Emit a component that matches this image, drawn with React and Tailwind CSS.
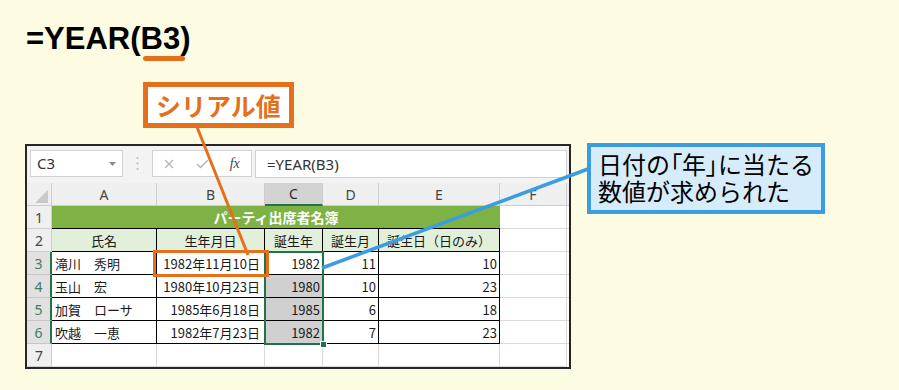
import React from "react";

const CJK = "font-['Noto_Sans_CJK_JP','Noto_Sans',sans-serif]";

const rows = [
  { n: 3, a: "滝川　秀明", b: "1982年11月10日", c: "1982", d: "11", e: "10" },
  { n: 4, a: "玉山　宏", b: "1980年10月23日", c: "1980", d: "10", e: "23" },
  { n: 5, a: "加賀　ローサ", b: "1985年6月18日", c: "1985", d: "6", e: "18" },
  { n: 6, a: "吹越　一恵", b: "1982年7月23日", c: "1982", d: "7", e: "23" },
];

function FormulaBar() {
  return (
    <div className="h-[41px] flex items-start pt-[4px] pl-[3px] pr-[2px] bg-[#f3f3f3]">
      <div className="w-[93px] h-[27px] border border-[#d2d2d2] bg-white flex items-center justify-between pl-[6px] pr-[6px]">
        <span className="text-[15px] leading-none text-[#333] font-['Noto_Sans',sans-serif]">C3</span>
        <svg width="7" height="4" viewBox="0 0 7 4">
          <path d="M0 0 L7 0 L3.5 4 Z" fill="#8a8a8a" />
        </svg>
      </div>
      <div className="w-[29px] h-[27px] flex items-center justify-center">
        <svg width="3" height="13" viewBox="0 0 3 13">
          <rect x="0.5" y="0" width="2" height="2" fill="#c4c4c4" />
          <rect x="0.5" y="5.5" width="2" height="2" fill="#c4c4c4" />
          <rect x="0.5" y="11" width="2" height="2" fill="#c4c4c4" />
        </svg>
      </div>
      <div className="w-[100px] h-[27px] border border-[#d2d2d2] bg-white flex items-center">
        <div className="w-[33px] flex justify-center">
          <svg width="10" height="10" viewBox="0 0 10 10">
            <path d="M1 1 L9 9 M9 1 L1 9" stroke="#b3b3b3" strokeWidth="1.3" />
          </svg>
        </div>
        <div className="w-[33px] flex justify-center">
          <svg width="13" height="10" viewBox="0 0 13 10">
            <path d="M1 5 L4.5 8.5 L12 1" stroke="#b3b3b3" strokeWidth="1.4" fill="none" />
          </svg>
        </div>
        <div className="w-[33px] flex justify-center">
          <span className="text-[14px] leading-none italic text-[#444] font-['Liberation_Serif',serif]">fx</span>
        </div>
      </div>
      <div className="ml-[3px] flex-1 h-[28px] border border-[#d2d2d2] bg-white flex items-center pl-[11px]">
        <span className="text-[15px] leading-none text-[#333] font-['Noto_Sans',sans-serif]">=YEAR(B3)</span>
      </div>
    </div>
  );
}

function RowHead({ n, sel }) {
  return (
    <div
      className={
        sel
          ? "w-[25px] h-full border-b border-b-[#c6c6c6] border-r-2 border-r-[#217346] bg-[#e1e1e1] flex items-center justify-center text-[14px] text-[#3f7d5c] font-['Noto_Sans',sans-serif]"
          : "w-[25px] h-full border-r border-b border-[#cdcdcd] bg-[#efefef] flex items-center justify-center text-[14px] text-[#444] font-['Noto_Sans',sans-serif]"
      }
    >
      {n}
    </div>
  );
}

function GridCell({ w }) {
  return <div className={"h-full border-r border-b border-[#dadada] bg-white " + w} />;
}

function Excel() {
  const cell = "h-full border-r border-b border-black flex items-center text-[13px] leading-none text-[#1a1a1a] " + CJK;
  return (
    <div className="w-[546px] h-[225px] border-2 border-[#262626] bg-[#f3f3f3] overflow-hidden flex flex-col shrink-0">
      <FormulaBar />
      <div className="relative bg-white flex-1">
        {/* column headers */}
        <div className="flex h-[23px] bg-[#efefef] font-['Noto_Sans',sans-serif] text-[14px] text-[#444]">
          <div className="w-[25px] h-full border-r border-b border-[#cdcdcd] flex items-end justify-end pr-[3px] pb-[2px]">
            <svg width="13" height="13" viewBox="0 0 13 13">
              <path d="M13 0 L13 13 L0 13 Z" fill="#c9c9c9" />
            </svg>
          </div>
          <div className="w-[105px] h-full border-r border-b border-[#cdcdcd] flex items-center justify-center">A</div>
          <div className="w-[108px] h-full border-r border-b border-[#cdcdcd] flex items-center justify-center">B</div>
          <div className="w-[58px] h-full border-r border-r-[#cdcdcd] border-b-2 border-b-[#217346] bg-[#d3d3d3] flex items-center justify-center text-[#2b2b2b]">C</div>
          <div className="w-[56px] h-full border-r border-b border-[#cdcdcd] flex items-center justify-center">D</div>
          <div className="w-[121px] h-full border-r border-b border-[#cdcdcd] flex items-center justify-center">E</div>
          <div className="w-[67px] h-full border-r border-b border-[#cdcdcd] flex items-center justify-center">F</div>
          <div className="flex-1 h-full border-b border-[#cdcdcd]" />
        </div>

        {/* row 1 */}
        <div className="flex h-[23px]">
          <RowHead n={1} />
          <div className={"w-[448px] h-full border-b border-black bg-[#7fb244] flex items-center justify-center text-[14px] leading-none font-bold text-white " + CJK}>
            パーティ出席者名簿
          </div>
          <GridCell w="w-[67px]" />
          <div className="flex-1 h-full border-b border-[#dadada]" />
        </div>

        {/* row 2 */}
        <div className="flex h-[23px]">
          <RowHead n={2} />
          <div className={cell + " w-[105px] bg-[#e2efda] justify-center"}>氏名</div>
          <div className={cell + " w-[108px] bg-[#e2efda] justify-center"}>生年月日</div>
          <div className={cell + " w-[58px] bg-[#e2efda] justify-center"}>誕生年</div>
          <div className={cell + " w-[56px] bg-[#e2efda] justify-center"}>誕生月</div>
          <div className={cell + " w-[121px] bg-[#e2efda] justify-center"}>誕生日（日のみ）</div>
          <GridCell w="w-[67px]" />
          <div className="flex-1 h-full border-b border-[#dadada]" />
        </div>

        {rows.map((r, i) => (
          <div key={r.n} className="flex h-[23px]">
            <RowHead n={r.n} sel />
            <div className={cell + " w-[105px] bg-white pl-[3px]"}>{r.a}</div>
            <div className={cell + " w-[108px] bg-white justify-end pr-[4px]"}>{r.b}</div>
            <div className={cell + " w-[58px] justify-end pr-[2px] " + (i === 0 ? "bg-white" : "bg-[#d0d0d0]")}>{r.c}</div>
            <div className={cell + " w-[56px] bg-white justify-end pr-[2px]"}>{r.d}</div>
            <div className={cell + " w-[121px] bg-white justify-end pr-[2px]"}>{r.e}</div>
            <GridCell w="w-[67px]" />
            <div className="flex-1 h-full border-b border-[#dadada]" />
          </div>
        ))}

        {/* row 7 */}
        <div className="flex h-[23px]">
          <RowHead n={7} />
          <GridCell w="w-[105px]" />
          <GridCell w="w-[108px]" />
          <GridCell w="w-[58px]" />
          <GridCell w="w-[56px]" />
          <GridCell w="w-[121px]" />
          <GridCell w="w-[67px]" />
          <div className="flex-1 h-full" />
        </div>

        {/* selection C3:C6 */}
        <div className="absolute left-[237px] top-[68px] w-[60px] h-[94px] border-2 border-[#217346]" />
        <div className="absolute left-[293px] top-[158px] w-[7px] h-[7px] bg-[#217346] border border-white" />
        {/* orange highlight B3 */}
        <div className="absolute left-[126px] top-[67px] w-[116px] h-[27px] border-[3px] border-[#e5701b]" />
      </div>
    </div>
  );
}

export default function App() {
  return (
    <div className="relative w-[899px] h-[390px] overflow-hidden bg-[#fefbe3]">
      <div className="h-[54px] pt-[23px] pl-[26px] text-[31px] leading-[31px] font-bold text-black font-['Liberation_Sans',Arial,sans-serif]">
        =YEAR(B3)
      </div>
      <div className={"ml-[143px] mt-[28px] w-[151px] h-[46px] border-[5px] border-[#e5701b] bg-white flex items-center justify-center text-[25px] leading-none font-bold text-[#e5701b] " + CJK}>
        シリアル値
      </div>
      <div className="flex items-start mt-[16px] pl-[25px]">
        <Excel />
        <div className={"ml-[16px] -mt-[1px] w-[238px] h-[71px] border-4 border-[#3b9ce2] bg-[#d6ecfa] pt-[3px] pl-[7px] text-[24px] leading-[27px] text-black whitespace-nowrap " + CJK}>
          <div>
            日付の<span className="[font-feature-settings:'palt']">「年」</span>に当たる
          </div>
          <div>数値が求められた</div>
        </div>
      </div>
      <svg className="absolute inset-0 pointer-events-none" width="899" height="390" viewBox="0 0 899 390">
        <line x1="145.5" y1="58.5" x2="182.5" y2="58.5" stroke="#e5701b" strokeWidth="5" strokeLinecap="round" />
        <line x1="197" y1="127" x2="248" y2="255" stroke="#e5701b" strokeWidth="3" />
        <line x1="322" y1="268" x2="588" y2="169" stroke="#3b9ce2" strokeWidth="3.5" />
      </svg>
    </div>
  );
}
